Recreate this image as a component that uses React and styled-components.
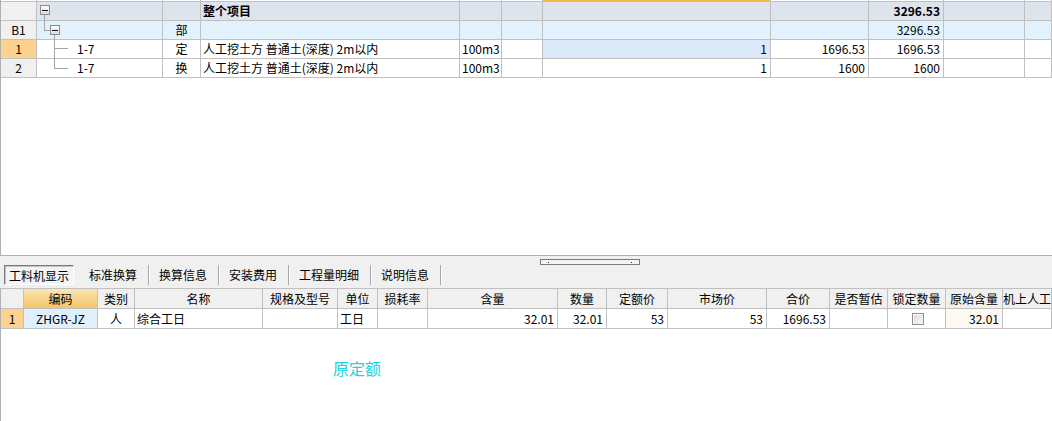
import React from 'react';
import styled, { createGlobalStyle } from 'styled-components';

const Global = createGlobalStyle`
  html, body { margin: 0; padding: 0; background: #fff; overflow: hidden; }
  body {
    font-family: "Noto Sans CJK SC", "Noto Sans", sans-serif;
    font-size: 12px;
    color: #000;
  }
`;

const GRID = '#c0c0c0';
const HEAD_BG = '#f0f0f0';
const SEL_HEAD = '#fdd28e';

const Page = styled.div`
  width: 1052px;
  height: 421px;
  display: flex;
  flex-direction: column;
  overflow: hidden;
`;

/* ---------- top table ---------- */
const TOP_COLS = '36px 126px 38px 259px 42px 41px 228px 98px 75px 81px 1fr';

const TopPanel = styled.div`
  height: 256px;
  flex-shrink: 0;
  box-sizing: border-box;
  border-left: 1px solid #b0b0b0;
  border-bottom: 1px solid #b0b0b0;
  background: #fff;
`;

const EdgeRow = styled.div`
  display: grid;
  grid-template-columns: ${TOP_COLS};
  height: 2px;
`;

const EdgeCell = styled.div`
  box-sizing: border-box;
  border-right: 1px solid ${GRID};
  border-bottom: 1px solid ${GRID};
  background: ${(p) => (p.$active ? '#f3b847' : '#fff')};
`;

const TRow = styled.div`
  display: grid;
  grid-template-columns: ${TOP_COLS};
  height: 19px;
  background: ${(p) => p.$bg || '#fff'};
`;

const TCell = styled.div`
  box-sizing: border-box;
  height: 19px;
  border-right: 1px solid ${GRID};
  border-bottom: 1px solid ${GRID};
  line-height: 18px;
  padding: ${(p) => (p.$align === 'right' ? '0 3px 0 0' : p.$align === 'center' ? '0' : '0 0 0 2px')};
  text-align: ${(p) => p.$align || 'left'};
  font-weight: ${(p) => (p.$bold ? 700 : 400)};
  background: ${(p) => p.$bg || 'transparent'};
  white-space: nowrap;
  overflow: hidden;
`;

const TreeCell = styled.div`
  box-sizing: border-box;
  height: 19px;
  border-right: 1px solid ${GRID};
  border-bottom: 1px solid ${GRID};
  line-height: 18px;
  display: flex;
  align-items: flex-start;
  white-space: nowrap;
`;

const TreeSvg = styled.svg`
  width: 40px;
  height: 18px;
  flex-shrink: 0;
  overflow: visible;
`;

const LINE = '#a4a4a4';

const Box = ({ x, y }) => (
  <g>
    <rect x={x + 0.5} y={y + 0.5} width="9" height="9" fill="url(#boxg)" stroke="#8c8c8c" />
    <rect x={x + 2} y={y + 5} width="6" height="1" fill="#111" />
  </g>
);

const TreeGrad = () => (
  <defs>
    <linearGradient id="boxg" x1="0" y1="0" x2="0" y2="1">
      <stop offset="0" stopColor="#ffffff" />
      <stop offset="1" stopColor="#d8d8d8" />
    </linearGradient>
  </defs>
);

const TreeRoot = () => (
  <TreeSvg viewBox="0 0 40 18">
    <TreeGrad />
    <Box x={3} y={3} />
    <rect x="7" y="13" width="1" height="7" fill={LINE} />
  </TreeSvg>
);

const TreeGroup = () => (
  <TreeSvg viewBox="0 0 40 18">
    <TreeGrad />
    <rect x="7" y="-1" width="1" height="10" fill={LINE} />
    <rect x="7" y="9" width="6" height="1" fill={LINE} />
    <Box x={13} y={4} />
    <rect x="17" y="14" width="1" height="6" fill={LINE} />
  </TreeSvg>
);

const TreeLeaf = ({ last }) => (
  <TreeSvg viewBox="0 0 40 18">
    <rect x="17" y="-1" width="1" height={last ? 10 : 20} fill={LINE} />
    <rect x="17" y={last ? 9 : 8} width="14" height="1" fill={LINE} />
  </TreeSvg>
);

/* ---------- splitter & tabs ---------- */
const SplitBar = styled.div`
  height: 9px;
  flex-shrink: 0;
  background: #f0f0f0;
  padding: 3px 0 0 540px;
  box-sizing: border-box;
`;

const Handle = styled.div`
  width: 100px;
  height: 6px;
  box-sizing: border-box;
  border: 1px solid #7c7c7c;
  background: #f4f4f4;
  display: flex;
  justify-content: space-between;
  align-items: flex-end;
  padding: 0 7px 1px;
`;

const HandleDot = styled.span`
  width: 1px;
  height: 1px;
  background: #333;
`;

const TabBar = styled.div`
  height: 23px;
  flex-shrink: 0;
  background: #f0f0f0;
  display: flex;
  align-items: flex-start;
  padding-left: 4px;
`;

const Tab = styled.div`
  height: 20px;
  box-sizing: border-box;
  line-height: 19px;
  font-size: 12px;
  white-space: nowrap;
  ${(p) =>
    p.$active
      ? `
    padding: 0 4px;
    margin-right: 5px;
    border: 1px solid;
    border-color: #7a7a7a #ffffff #ffffff #7a7a7a;
    box-shadow: inset 1px 1px 0 #c4c4c4;
    background: #f3f3f3;
  `
      : `
    padding: 0 11px 0 10px;
    border-right: 1px solid #a6a6a6;
    box-shadow: 1px 0 0 #ffffff;
    line-height: 20px;
  `}
`;

/* ---------- bottom table ---------- */
const BOT_COLS =
  '23px 74px 37px 128px 75px 40px 50px 130px 49px 61px 99px 63px 58px 58px 57px 1fr';

const BottomPanel = styled.div`
  flex: 1;
  background: #fff;
  box-sizing: border-box;
  border-left: 1px solid #b0b0b0;
  border-top: 1px solid ${GRID};
  display: flex;
  flex-direction: column;
`;

const BRow = styled.div`
  display: grid;
  grid-template-columns: ${BOT_COLS};
  height: 20px;
`;

const HCell = styled.div`
  box-sizing: border-box;
  height: 20px;
  border-right: 1px solid ${GRID};
  border-bottom: 1px solid ${GRID};
  line-height: 19px;
  text-align: center;
  background: ${(p) => (p.$sel ? 'linear-gradient(#fce6b3, #f4c467)' : HEAD_BG)};
  white-space: nowrap;
  overflow: hidden;
`;

const BCell = styled.div`
  box-sizing: border-box;
  height: 20px;
  border-right: 1px solid ${GRID};
  border-bottom: 1px solid ${GRID};
  line-height: 19px;
  text-align: ${(p) => p.$align || 'left'};
  padding: ${(p) => (p.$align === 'right' ? '0 3px 0 0' : p.$align === 'center' ? '0' : '0 0 0 2px')};
  background: ${(p) => p.$bg || '#fff'};
  white-space: nowrap;
  overflow: hidden;
  display: ${(p) => (p.$flex ? 'flex' : 'block')};
  align-items: center;
  justify-content: center;
`;

const CheckBox = styled.span`
  width: 12px;
  height: 12px;
  box-sizing: border-box;
  border: 1px solid #8e8e8e;
  background: linear-gradient(135deg, #d6d6d6, #fafafa);
  box-shadow: inset 1px 1px 0 #ffffff;
`;

const NoteArea = styled.div`
  flex: 1;
  padding: 31px 0 0 332px;
`;

const Note = styled.div`
  font-size: 16px;
  line-height: 16px;
  color: #22d2d8;
`;

const name = '人工挖土方 普通土(深度) 2m以内';

const bottomHeaders = [
  '', '编码', '类别', '名称', '规格及型号', '单位', '损耗率', '含量', '数量',
  '定额价', '市场价', '合价', '是否暂估', '锁定数量', '原始含量', '机上人工',
];

export default function App() {
  return (
    <Page>
      <Global />
      <TopPanel>
        <EdgeRow>
          {Array.from({ length: 11 }).map((_, i) => (
            <EdgeCell key={i} $active={i === 6} />
          ))}
        </EdgeRow>

        <TRow $bg="#dde4ee">
          <TCell $bg={HEAD_BG} />
          <TreeCell><TreeRoot /></TreeCell>
          <TCell />
          <TCell $bold>整个项目</TCell>
          <TCell />
          <TCell />
          <TCell />
          <TCell />
          <TCell $align="right" $bold>3296.53</TCell>
          <TCell />
          <TCell />
        </TRow>

        <TRow $bg="#e1f2fd">
          <TCell $bg={HEAD_BG} $align="center">B1</TCell>
          <TreeCell><TreeGroup /></TreeCell>
          <TCell $align="center">部</TCell>
          <TCell />
          <TCell />
          <TCell />
          <TCell />
          <TCell />
          <TCell $align="right">3296.53</TCell>
          <TCell />
          <TCell />
        </TRow>

        <TRow>
          <TCell $bg={SEL_HEAD} $align="center">1</TCell>
          <TreeCell><TreeLeaf />1-7</TreeCell>
          <TCell $align="center">定</TCell>
          <TCell>{name}</TCell>
          <TCell>100m3</TCell>
          <TCell />
          <TCell $align="right" $bg="#dce9f8">1</TCell>
          <TCell $align="right">1696.53</TCell>
          <TCell $align="right">1696.53</TCell>
          <TCell />
          <TCell />
        </TRow>

        <TRow>
          <TCell $bg={HEAD_BG} $align="center">2</TCell>
          <TreeCell><TreeLeaf last />1-7</TreeCell>
          <TCell $align="center">换</TCell>
          <TCell>{name}</TCell>
          <TCell>100m3</TCell>
          <TCell />
          <TCell $align="right">1</TCell>
          <TCell $align="right">1600</TCell>
          <TCell $align="right">1600</TCell>
          <TCell />
          <TCell />
        </TRow>
      </TopPanel>

      <SplitBar>
        <Handle>
          <HandleDot />
          <HandleDot />
        </Handle>
      </SplitBar>

      <TabBar>
        <Tab $active>工料机显示</Tab>
        <Tab>标准换算</Tab>
        <Tab>换算信息</Tab>
        <Tab>安装费用</Tab>
        <Tab>工程量明细</Tab>
        <Tab>说明信息</Tab>
      </TabBar>

      <BottomPanel>
        <BRow>
          {bottomHeaders.map((h, i) => (
            <HCell key={i} $sel={i === 1}>{h}</HCell>
          ))}
        </BRow>
        <BRow>
          <BCell $bg={SEL_HEAD} $align="center">1</BCell>
          <BCell $bg="#e0effc" $align="center">ZHGR-JZ</BCell>
          <BCell $align="center">人</BCell>
          <BCell>综合工日</BCell>
          <BCell />
          <BCell>工日</BCell>
          <BCell />
          <BCell $align="right">32.01</BCell>
          <BCell $align="right">32.01</BCell>
          <BCell $align="right">53</BCell>
          <BCell $align="right">53</BCell>
          <BCell $align="right">1696.53</BCell>
          <BCell />
          <BCell $flex><CheckBox /></BCell>
          <BCell $align="right" $bg="#fdf8f1">32.01</BCell>
          <BCell />
        </BRow>
        <NoteArea>
          <Note>原定额</Note>
        </NoteArea>
      </BottomPanel>
    </Page>
  );
}
